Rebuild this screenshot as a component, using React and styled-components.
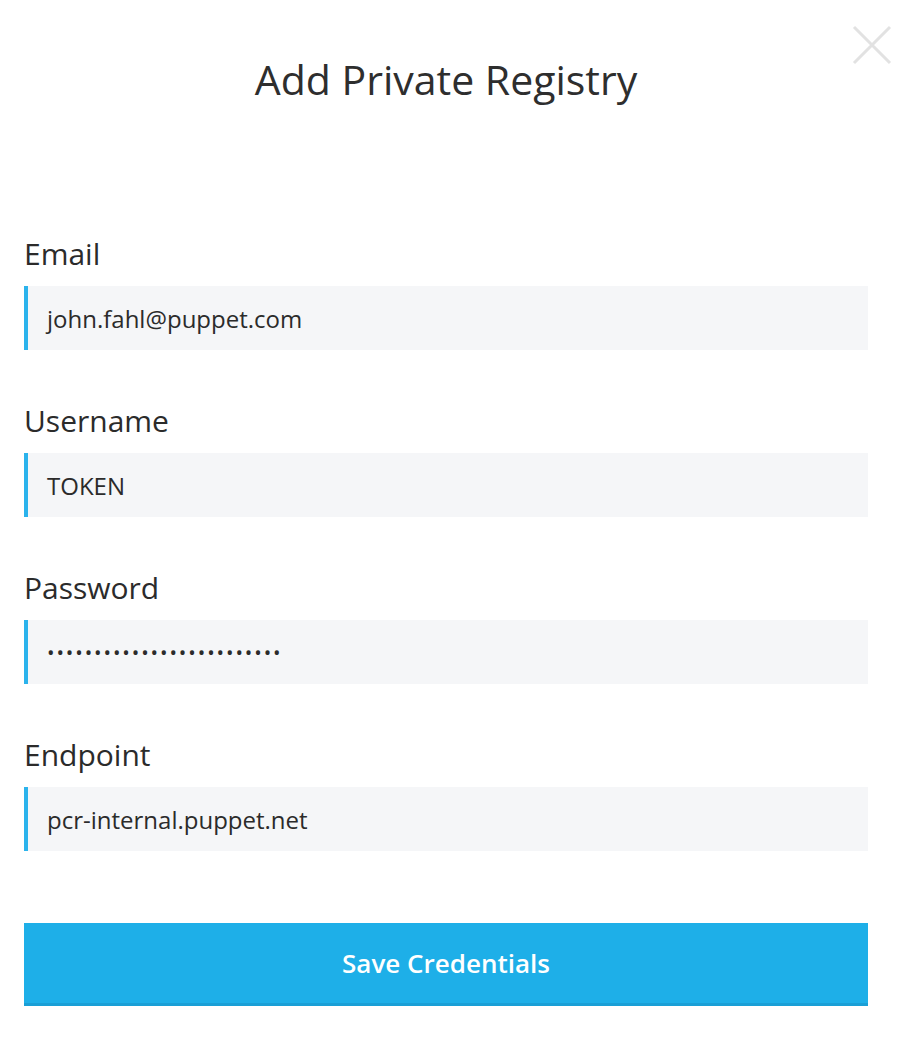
import React from 'react';
import styled, { createGlobalStyle } from 'styled-components';

const GlobalStyle = createGlobalStyle`
	body {
		margin: 0;
		background: #ffffff;
		font-family: 'Open Sans', 'Noto Sans', sans-serif;
		color: #2b2b2b;
	}
`;

const fields = [
	{ label: 'Email', value: 'john.fahl@puppet.com' },
	{ label: 'Username', value: 'TOKEN' },
	{ label: 'Password', value: '•••••••••••••••••••••••••', secret: true },
	{ label: 'Endpoint', value: 'pcr-internal.puppet.net' },
];

const App = () => {
	return (
		<>
			<GlobalStyle />
			<Modal>
				<Close aria-label="Close">
					<svg width="40" height="40" viewBox="0 0 40 40">
						<path d="M2 2 L38 38 M38 2 L2 38" stroke="#e2e2e2" strokeWidth="3" fill="none" />
					</svg>
				</Close>
				<Title>Add Private Registry</Title>
				<Form>
					{fields.map(f => (
						<Field key={f.label}>
							<Label>{f.label}</Label>
							<Input secret={f.secret}>{f.value}</Input>
						</Field>
					))}
					<SaveButton>Save Credentials</SaveButton>
				</Form>
			</Modal>
		</>
	);
};

const Modal = styled.div`
	position: relative;
	width: 900px;
	height: 1040px;
	box-sizing: border-box;
	padding: 52px 32px 0 24px;
`;

const Close = styled.div`
	position: absolute;
	top: 25px;
	right: 8px;
	width: 40px;
	height: 40px;
`;

const Title = styled.h1`
	margin: 0;
	text-align: center;
	font-size: 41px;
	font-weight: 400;
	line-height: 54px;
	color: #2e2e2e;
`;

const Form = styled.div`
	display: flex;
	flex-direction: column;
	margin-top: 128px;
`;

const Field = styled.div`
	display: flex;
	flex-direction: column;
	margin-bottom: 51px;
`;

const Label = styled.label`
	font-size: 30px;
	line-height: 40px;
	margin-bottom: 12px;
	color: #2b2b2b;
`;

const Input = styled.div`
	height: 64px;
	box-sizing: border-box;
	background: #f5f6f8;
	border-left: 4px solid #2bb3ec;
	padding-left: 19px;
	display: flex;
	align-items: center;
	font-size: ${props => (props.secret ? '20px' : '24px')};
	letter-spacing: ${props => (props.secret ? '1.9px' : '0')};
	color: #2b2b2b;
`;

const SaveButton = styled.button`
	margin-top: 21px;
	height: 83px;
	width: 100%;
	border: none;
	border-bottom: 3px solid #1a9fd6;
	background: #1eafe8;
	color: #ffffff;
	font-family: 'Open Sans', sans-serif;
	font-size: 26px;
	font-weight: 600;
	cursor: pointer;
`;

export default App;
